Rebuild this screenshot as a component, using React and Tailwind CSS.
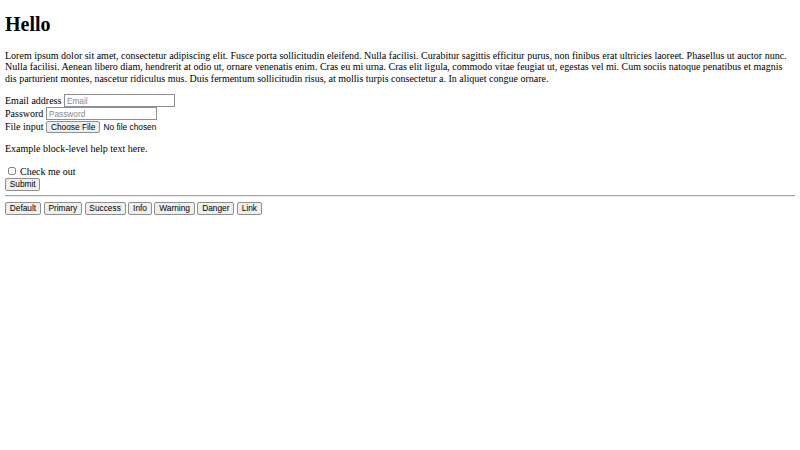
export default function App() {
  const btn =
    "h-[12.5px] px-[3.75px] border border-[#8f8f8f] bg-[#efefef] rounded-[2px] font-['Liberation_Sans',Arial,sans-serif] text-[8.33px] leading-[10px] text-black flex items-center";
  const input =
    "h-[13px] w-[111px] border border-[#8f8f8f] bg-white px-[2px] font-['Liberation_Sans',Arial,sans-serif] text-[8.33px] leading-[10px] text-black placeholder:text-[#8a8a8a] outline-none";
  return (
    <div className="min-h-[450px] bg-white px-[5px] pt-[13.4px] font-['Liberation_Serif','Times_New_Roman',serif] text-[10px] leading-[11.5px] text-black">
      <h1 className="mb-[13.4px] text-[20px] leading-[23px] font-bold">Hello</h1>
      <p className="mb-[10px]">
        Lorem ipsum dolor sit amet, consectetur adipiscing elit. Fusce porta sollicitudin eleifend. Nulla facilisi. Curabitur sagittis efficitur purus, non finibus erat ultricies laoreet. Phasellus ut auctor nunc. Nulla facilisi. Aenean libero diam, hendrerit at odio ut, ornare venenatis enim. Cras eu mi urna. Cras elit ligula, commodo vitae feugiat ut, egestas vel mi. Cum sociis natoque penatibus et magnis dis parturient montes, nascetur ridiculus mus. Duis fermentum sollicitudin risus, at mollis turpis consectetur a. In aliquet congue ornare.
      </p>
      <form onSubmit={(e) => e.preventDefault()}>
        <div className="flex h-[13px] items-center gap-[2.5px]">
          <label>Email address</label>
          <input type="email" placeholder="Email" className={input} />
        </div>
        <div className="flex h-[13px] items-center gap-[2.5px]">
          <label>Password</label>
          <input type="password" placeholder="Password" className={input} />
        </div>
        <div className="flex h-[13px] items-center gap-[2.5px]">
          <label>File input</label>
          <span className={btn}>Choose File</span>
          <span className="ml-[1px] font-['Liberation_Sans',Arial,sans-serif] text-[8.33px] leading-[10px]">No file chosen</span>
        </div>
        <p className="my-[10px]">Example block-level help text here.</p>
        <div className="flex h-[13px] items-center">
          <input type="checkbox" className="ml-[3px] mr-[4px] h-[8px] w-[8px]" />
          <label>Check me out</label>
        </div>
        <div className="flex h-[13px] items-center">
          <button type="submit" className={btn}>Submit</button>
        </div>
      </form>
      <hr className="mt-[4px] mb-[5px] border-t border-t-[#a8a8a8] border-b border-b-[#ececec]" />
      <div className="flex h-[13px] items-center gap-[2.75px]">
        {["Default", "Primary", "Success", "Info", "Warning", "Danger", "Link"].map((l) => (
          <button key={l} type="button" className={btn}>{l}</button>
        ))}
      </div>
    </div>
  );
}
